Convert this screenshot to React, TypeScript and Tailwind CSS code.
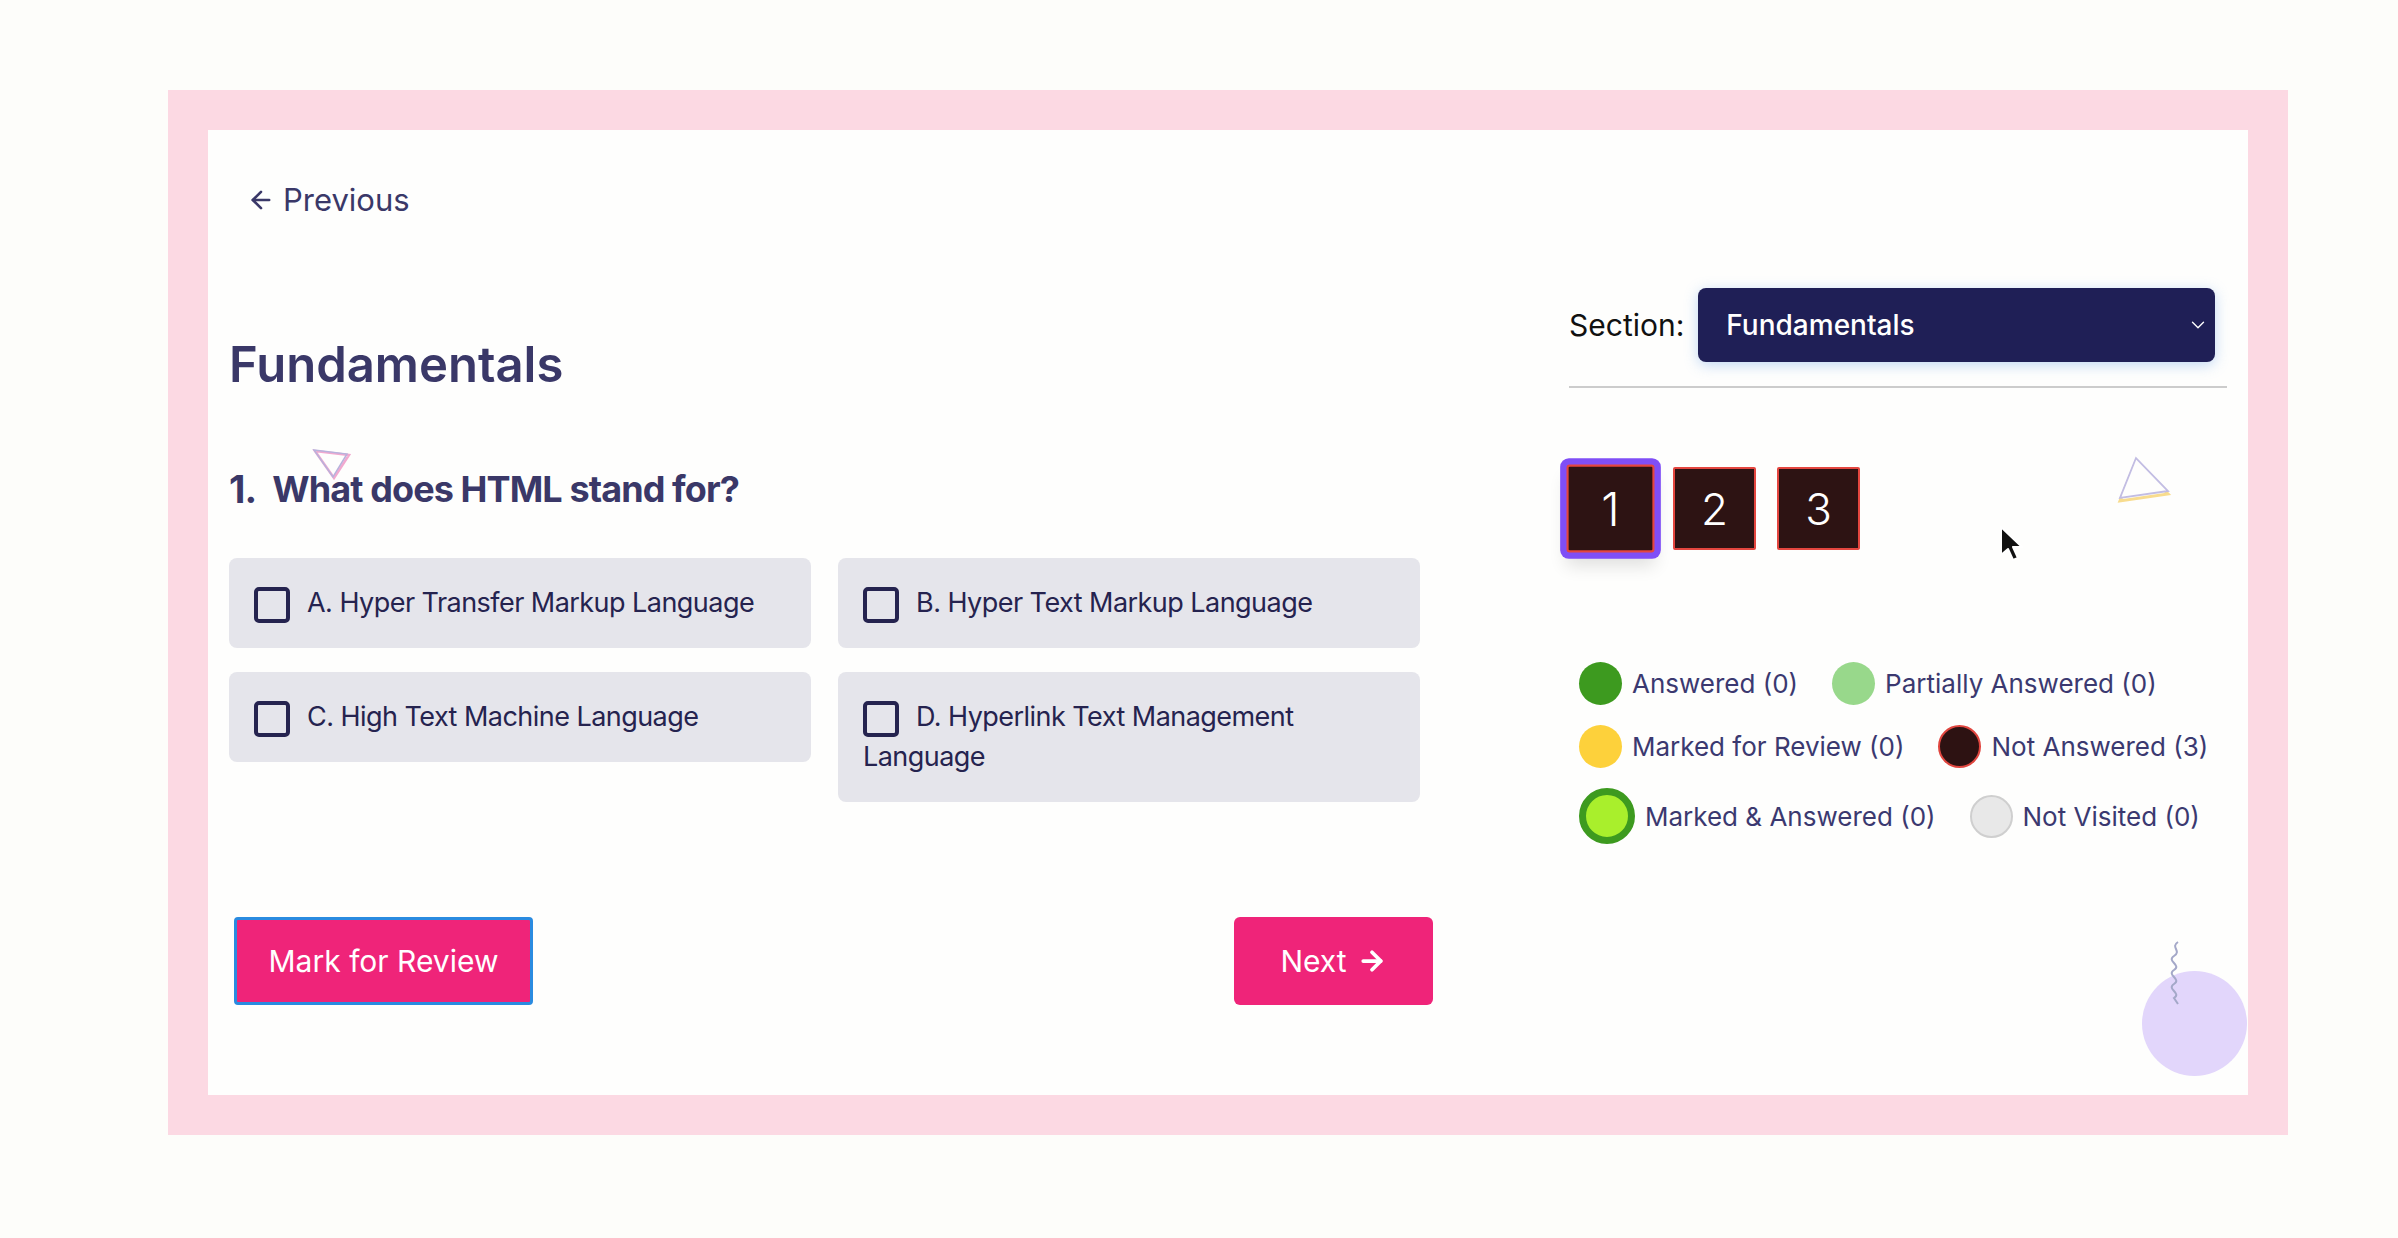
import React from 'react';
import { ArrowLeft, ArrowRight, ChevronDown } from 'lucide-react';

const options = [
  { key: 'A', text: 'Hyper Transfer Markup Language' },
  { key: 'B', text: 'Hyper Text Markup Language' },
  { key: 'C', text: 'High Text Machine Language' },
  { key: 'D', text: 'Hyperlink Text Management Language' },
];

const legend = [
  [
    { label: 'Answered (0)', dot: 'w-[43px] h-[43px] bg-[#3d9a1f]' },
    { label: 'Partially Answered (0)', dot: 'w-[43px] h-[43px] bg-[#98d88b]' },
  ],
  [
    { label: 'Marked for Review (0)', dot: 'w-[43px] h-[43px] bg-[#fdd13b]' },
    { label: 'Not Answered (3)', dot: 'w-[43px] h-[43px] bg-[#2d1212] border-2 border-[#e0463f]' },
  ],
  [
    { label: 'Marked & Answered (0)', dot: 'w-[56px] h-[56px] bg-[#a9ef2c] border-[7px] border-[#3d9a1f]' },
    { label: 'Not Visited (0)', dot: 'w-[43px] h-[43px] bg-[#e8e8e8] border-2 border-[#cfcfcf]' },
  ],
];

const App = () => {
  return (
    <div className="min-h-[1238px] bg-[#fdfdfa] pt-[90px] pl-[168px] font-['Inter',sans-serif]">
      <div className="w-[2120px] bg-[#fcd9e3] p-[40px]">
        <div className="relative h-[965px] bg-[#fefefd] px-[21px] pt-[50px]">
          {/* back link */}
          <button className="ml-[18px] flex items-center gap-[8px] text-[31px] leading-[40px] text-[#3a3868]">
            <ArrowLeft size={28} strokeWidth={2.25} />
            Previous
          </button>

          <div className="flex justify-between">
            {/* question column */}
            <div className="w-[1204px] flex flex-col">
              <h1 className="mt-[116px] text-[49px] leading-[58px] font-semibold text-[#3a3868]">Fundamentals</h1>
              <h2 className="mt-[73px] flex items-center gap-[16px] text-[36px] leading-[44px] font-bold tracking-tight text-[#3a3868]">
                <span className="text-[38px]">1.</span>
                <span>What does HTML stand for?</span>
              </h2>

              <div className="mt-[47px] w-[1191px] grid grid-cols-2 gap-x-[27px] gap-y-[24px] items-start">
                {options.map((o) => (
                  <label key={o.key} className="block rounded-[8px] bg-[#e5e5eb] p-[25px] text-[27px] leading-[40px] text-[#25234f] tracking-[-0.02em]">
                    <span className="inline-block w-[36px] h-[36px] mr-[17px] align-middle rounded-[5px] border-[4px] border-[#25234f]"></span>
                    {o.key}. {o.text}
                  </label>
                ))}
              </div>

              <div className="mt-[115px] flex items-center justify-between">
                <button className="ml-[5px] w-[299px] h-[88px] rounded-[4px] border-[3px] border-[#2a8be0] bg-[#ef2479] text-[30px] text-white">
                  Mark for Review
                </button>
                <button className="w-[199px] h-[88px] rounded-[6px] bg-[#ef2479] text-[30px] text-white flex items-center justify-center gap-[10px]">
                  Next
                  <ArrowRight size={30} strokeWidth={3} />
                </button>
              </div>
            </div>

            {/* navigator column */}
            <div className="w-[658px] flex flex-col">
              <div className="mt-[68px] flex items-center">
                <span className="text-[30px] text-[#111111] mr-[14px]">Section:</span>
                <div className="w-[517px] h-[74px] rounded-[8px] bg-[#1f1f56] pl-[28px] pr-[6px] flex items-center justify-between text-white text-[28px] font-medium shadow-[0_3px_14px_rgba(120,170,235,0.45)]">
                  Fundamentals
                  <ChevronDown size={22} strokeWidth={1.5} />
                </div>
              </div>
              <div className="mt-[24px] h-[2px] bg-[#cccccc]"></div>

              <div className="mt-[79px] flex gap-[21px]">
                {[1, 2, 3].map((n) => (
                  <div
                    key={n}
                    className={
                      n === 1
                        ? 'w-[83px] h-[83px] scale-[1.06] rounded-[3px] bg-[#2d1313] border-2 border-[#e4463f] flex items-center justify-center text-white text-[44px] font-light shadow-[0_0_0_6px_#7f4ef6,0_12px_16px_rgba(0,0,0,0.12)]'
                        : 'w-[83px] h-[83px] rounded-[2px] bg-[#2d1313] border-2 border-[#e4463f] flex items-center justify-center text-white text-[44px] font-light'
                    }
                  >
                    {n}
                  </div>
                ))}
              </div>

              <div className="mt-[112px] ml-[10px] flex flex-col gap-y-[20px]">
                {legend.map((row, i) => (
                  <div key={i} className="flex items-center gap-x-[34px]">
                    {row.map((item) => (
                      <div key={item.label} className="flex items-center gap-[10px]">
                        <span className={`rounded-full ${item.dot}`}></span>
                        <span className="text-[26px] text-[#3b3970]">{item.label}</span>
                      </div>
                    ))}
                  </div>
                ))}
              </div>
            </div>
          </div>

          {/* decorations */}
          <svg className="absolute left-[104px] top-[318px]" width="40" height="34" viewBox="0 0 40 34">
            <polygon points="3,3 37,7 22,30" fill="none" stroke="#f2a9cf" strokeWidth="2.5" />
            <polygon points="2,2 35,6 21,29" fill="none" stroke="#b8b2dc" strokeWidth="1.5" />
          </svg>
          <svg className="absolute left-[1900px] top-[325px]" width="64" height="50" viewBox="0 0 64 50">
            <polygon points="28,3 12,43 60,36" fill="none" stroke="#f8dc8e" strokeWidth="3" transform="translate(0,3)" />
            <polygon points="28,3 12,43 60,36" fill="#fefefd" stroke="#c2bde3" strokeWidth="1.8" />
          </svg>
          <div className="absolute left-[1934px] top-[841px] w-[105px] h-[105px] rounded-full bg-[#e2d6fb]"></div>
          <svg className="absolute left-[1958px] top-[810px]" width="20" height="68" viewBox="0 0 20 68">
            <path d="M12 2 C4 7, 16 11, 8 16 S16 25, 8 30 S16 39, 8 44 S16 53, 8 58 L12 64" fill="none" stroke="#a4a8c8" strokeWidth="2" />
          </svg>
          {/* mouse pointer */}
          <svg className="absolute left-[1790px] top-[395px]" width="26" height="38" viewBox="0 0 26 38">
            <path d="M3 2 L3 30 L10 24 L15 35 L20 33 L15 22 L24 22 Z" fill="#111111" stroke="#ffffff" strokeWidth="2" strokeLinejoin="round" />
          </svg>
        </div>
      </div>
    </div>
  );
};

export default App;
